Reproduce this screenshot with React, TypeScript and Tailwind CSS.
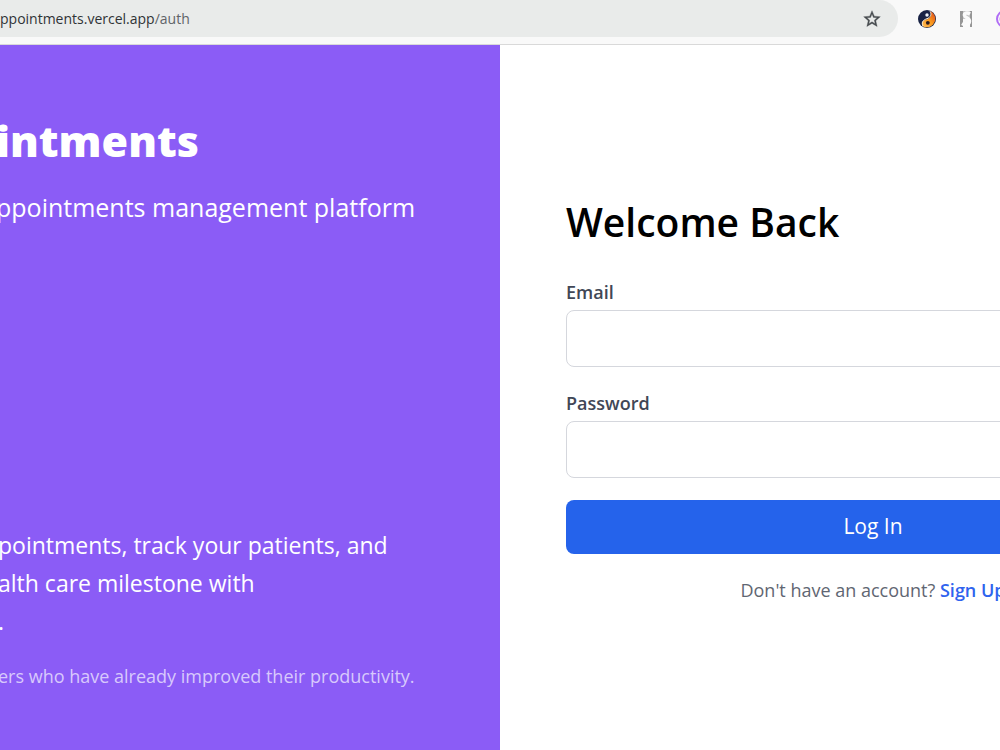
import { useState } from 'react';

function StarIcon() {
  return (
    <svg width="20" height="20" viewBox="0 0 24 24" fill="#474b4f" stroke="#474b4f" strokeWidth="0.4" aria-hidden="true">
      <path d="M22 9.24l-7.19-.62L12 2 9.19 8.63 2 9.24l5.46 4.73L5.82 21 12 17.27 18.18 21l-1.63-7.03L22 9.24zM12 15.4l-3.76 2.27 1-4.28-3.32-2.88 4.38-.38L12 6.1l1.71 4.04 4.38.38-3.32 2.88 1 4.28L12 15.4z" />
    </svg>
  );
}

function YinYangIcon() {
  return (
    <svg width="18" height="18" viewBox="0 0 18 18" aria-hidden="true">
      <defs>
        <linearGradient id="flame" x1="1" y1="0" x2="0" y2="1">
          <stop offset="0" stopColor="#d9401c" />
          <stop offset="0.5" stopColor="#fb9a1e" />
          <stop offset="1" stopColor="#ffbd5c" />
        </linearGradient>
      </defs>
      <circle cx="9" cy="9" r="9" fill="#182245" />
      <path d="M12 1A8.4 8.4 0 0 1 5.500 16.700C3 14.500 3.500 11 7 10c3.500-1 6-2.500 6-5.500 0-1.500-.4-2.700-1-3.500z" fill="url(#flame)" />
      <path d="M12 1.3C14 4 12.5 7.500 9 8.700 5.500 9.800 3 12 5 16" fill="none" stroke="#fff3df" strokeWidth="1" />
      <circle cx="9" cy="5" r="1.7" fill="#eef2fa" />
      <circle cx="9.8" cy="12.8" r="1.9" fill="#2a1b20" />
    </svg>
  );
}

function HsIcon() {
  return (
    <svg width="14" height="18" viewBox="0 0 14 18" aria-hidden="true">
      <path d="M1 1h3v16H1zM11 1h2v16h-2z" fill="#969696" />
      <path d="M4 1h7v8H4z" fill="#c4c4c4" />
      <path d="M11 4C8 2 5 3 5.500 5.500S11 8 10.500 11.500s-5 3.500-7.500 2" fill="none" stroke="#fafafa" strokeWidth="3.5" />
    </svg>
  );
}

function SwirlIcon() {
  return (
    <svg width="18" height="18" viewBox="0 0 18 18" fill="none" stroke="#b06df5" strokeWidth="2" aria-hidden="true">
      <circle cx="9" cy="9" r="8" />
      <circle cx="9" cy="9" r="5" strokeWidth="1" />
    </svg>
  );
}

function BrowserBar() {
  return (
    <header className="flex h-[45px] items-start border-b border-[#d9d9d9] bg-[#f9f9f9]">
      <div className="flex h-[37px] w-[898px] shrink-0 items-center justify-between rounded-r-full bg-[#e9ebea] pr-4">
        <span className="text-sm text-[#303336]">
          ppointments.vercel.app<span className="text-[#5f6368]">/auth</span>
        </span>
        <button type="button" aria-label="Bookmark this page">
          <StarIcon />
        </button>
      </div>
      <div className="flex h-[37px] min-w-0 grow items-center gap-[23px] overflow-hidden pl-5">
        <button type="button" aria-label="Theme extension" className="shrink-0"><YinYangIcon /></button>
        <button type="button" aria-label="Highlight extension" className="shrink-0"><HsIcon /></button>
        <button type="button" aria-label="Swirl extension" className="shrink-0"><SwirlIcon /></button>
      </div>
    </header>
  );
}

function Intro() {
  return (
    <section className="flex w-1/2 shrink-0 flex-col justify-between overflow-hidden whitespace-nowrap bg-[#8b5cf6] pt-[68px] pb-[60px] text-white">
      <div className="-ml-1">
        <h1 className="text-[43px] leading-[56px] font-extrabold">intments</h1>
        <p className="mt-5 text-[25px] leading-9">ppointments management platform</p>
      </div>
      <div className="-ml-0.5">
        <p className="text-[23px] leading-[38px]">
          pointments, track your patients, and
          <br />
          alth care milestone with
          <br />.
        </p>
        <p className="mt-[22px] text-lg leading-7 text-[#d8c9fc]">ers who have already improved their productivity.</p>
      </div>
    </section>
  );
}

function Field({ id, label, type, value, onChange }: { id: string; label: string; type: string; value: string; onChange: (e: React.ChangeEvent<HTMLInputElement>) => void }) {
  return (
    <div className="mb-[22px]">
      <label htmlFor={id} className="block text-lg leading-7 font-semibold text-[#414756]">{label}</label>
      <input
        id={id}
        name={id}
        type={type}
        value={value}
        onChange={onChange}
        className="mt-1 block h-[57px] w-full rounded-lg border border-[#d5d7dd] bg-white px-4 text-lg"
      />
    </div>
  );
}

export default function App() {
  const [form, setForm] = useState({ email: '', password: '' });

  function handleChange(e: React.ChangeEvent<HTMLInputElement>) {
    setForm({ ...form, [e.target.name]: e.target.value });
  }

  return (
    <div className="flex min-h-screen flex-col overflow-hidden bg-white font-['Open_Sans','Noto_Sans',sans-serif]">
      <BrowserBar />
      <main className="flex grow">
        <Intro />
        <section className="flex grow flex-col justify-center pt-0.5 pl-[66px]">
          <form onSubmit={(e) => e.preventDefault()} className="w-full min-w-[614px]">
            <h2 className="mb-7 text-[39px] leading-[56px] font-semibold text-black">Welcome Back</h2>
            <Field id="email" label="Email" type="email" value={form.email} onChange={handleChange} />
            <Field id="password" label="Password" type="password" value={form.password} onChange={handleChange} />
            <button type="submit" className="block h-[54px] w-full rounded-lg bg-[#2563eb] text-[21px] text-white">Log In</button>
            <p className="mt-[22px] text-center text-lg leading-7 text-[#5f6672]">
              Don't have an account? <a href="#signup" className="font-semibold text-[#2f63ee]">Sign Up</a>
            </p>
          </form>
        </section>
      </main>
    </div>
  );
}
